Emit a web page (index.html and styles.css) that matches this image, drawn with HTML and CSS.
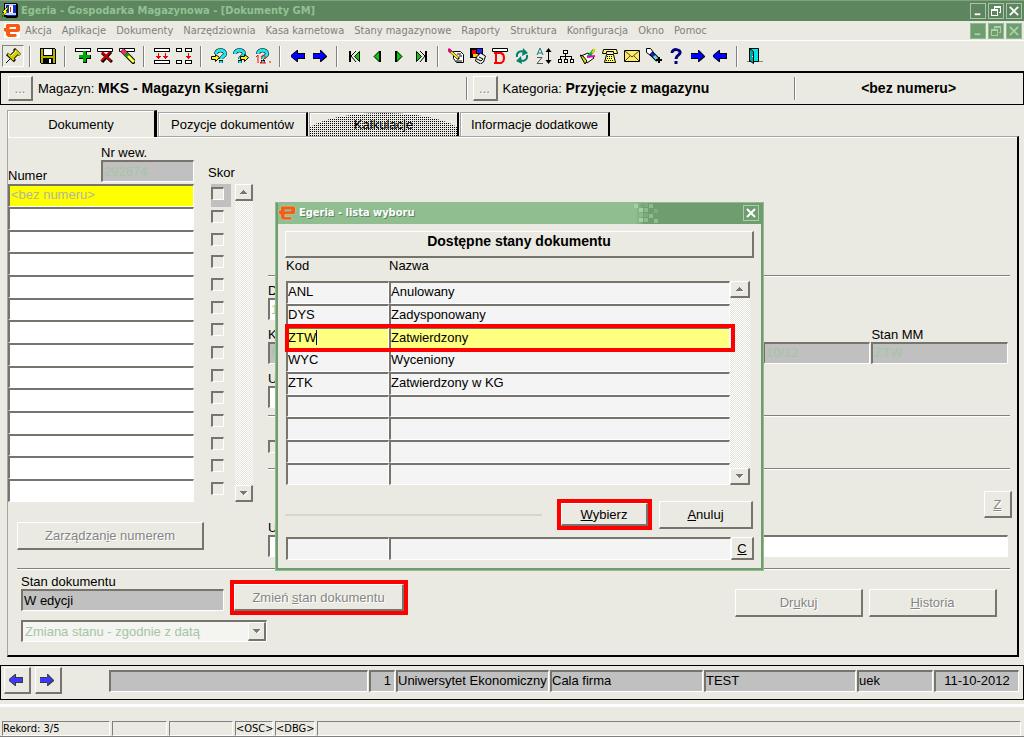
FILE: index.html
```html
<!DOCTYPE html>
<html lang="pl">
<head>
<meta charset="utf-8">
<meta name="viewport" content="width=device-width, initial-scale=1">
<title>Egeria - Gospodarka Magazynowa</title>
<link rel="stylesheet" href="styles.css">
</head>
<body>
<svg class="defs" aria-hidden="true">
  <symbol id="egeria" viewBox="0 0 16 15"><path fill="#fff" d="M0 0h16v15H0z"/><path fill="#f95b12" d="M3 1h12l1 2v5l-2 1H6v2h6l1 2-2 1H4l-2-2V9L0 8V5h2V2z"/><path fill="#fff" d="M6 4h6v2H5z"/></symbol>
  <symbol id="arrow-left" viewBox="0 0 16 16"><path fill="#000" d="M8 2v3h7v6H8v3H7L1 9V7l6-5z"/><path fill="#00f" d="M7 3v3h7v4H7v3L1 8z"/></symbol>
  <symbol id="arrow-right" viewBox="0 0 16 16"><path fill="#000" d="M8 2v3H1v6h7v3h1l6-5V8L9 2z"/><path fill="#00f" d="M8 3v3H1v4h7v3l6-5z"/></symbol>
  <symbol id="up" viewBox="0 0 8 5"><path fill="#fff" d="M1 5h7V4z"/><path fill="#777" d="M3 0h1v1h1v1h1v1h1v1H0V3h1V2h1V1h1z"/></symbol>
  <symbol id="down" viewBox="0 0 8 5"><path fill="#fff" d="M4 5l4-4v1L5 5z"/><path fill="#777" d="M0 0h7v1H6v1H5v1H4v1H3V3H2V2H1V1H0z"/></symbol>
  <symbol id="query" viewBox="0 0 16 16"><path fill="none" stroke="#000" stroke-width="4" d="M5 6c0-5 9-5 9 0 0 2-4 3-4 5M10 12v3"/><path fill="none" stroke="#20e8f0" stroke-width="3" d="M5 6c0-5 9-5 9 0 0 2-4 3-4 5M10 13v2"/></symbol>
</svg>

<header class="titlebar">
  <svg class="app-icon" viewBox="0 0 16 16" shape-rendering="crispEdges"><path fill="#000" d="M2 0h13v1h1v13h-1v1H4v-1H2z"/><path fill="#c9d4ff" d="M3 1h11v11H3z"/><path fill="#1030c0" d="M4 2h3v8H4zM11 2h3v8h-3zM5 12h9v1H5z"/><path fill="#fff" d="M7 3h4v7H7z"/><path fill="#c22" d="M8 4h1v5H8z"/><path fill="#ff0" stroke="#000" stroke-width=".5" d="M5 4L0 9h2l-2 5 6-6H4l3-4z"/></svg>
  <h1>Egeria - Gospodarka Magazynowa - [Dokumenty GM]</h1>
  <div class="win-buttons">
    <button aria-label="Minimalizuj"><svg viewBox="0 0 15 15"><path fill="#fff" d="M4 10h6v2H4z"/></svg></button>
    <button aria-label="Przywróć"><svg viewBox="0 0 14 14" shape-rendering="crispEdges"><path fill="#fff" d="M5 2h7v7h-2V8h1V4H6v1H5zM2 5h7v7H2zM3 7v4h5V7z" fill-rule="evenodd"/></svg></button>
    <button aria-label="Zamknij"><svg viewBox="0 0 15 15"><path fill="none" stroke="#fff" stroke-width="2" d="M3 3l9 9M12 3l-9 9"/></svg></button>
  </div>
</header>

<nav class="menubar">
  <svg class="menu-logo"><use href="#egeria"/></svg>
  <a href="#">Akcja</a><a href="#">Aplikacje</a><a href="#">Dokumenty</a><a href="#">Narzędziownia</a><a href="#">Kasa karnetowa</a><a href="#">Stany magazynowe</a><a href="#">Raporty</a><a href="#">Struktura</a><a href="#">Konfiguracja</a><a href="#">Okno</a><a href="#">Pomoc</a>
  <div class="win-buttons faded">
    <button aria-label="Minimalizuj dokument"><svg viewBox="0 0 15 15"><path fill="#abcfab" d="M4 10h6v2H4z"/></svg></button>
    <button aria-label="Przywróć dokument"><svg viewBox="0 0 14 14" shape-rendering="crispEdges"><path fill="#abcfab" d="M5 2h7v7h-2V8h1V4H6v1H5zM2 5h7v7H2zM3 7v4h5V7z" fill-rule="evenodd"/></svg></button>
    <button aria-label="Zamknij dokument"><svg viewBox="0 0 15 15"><path fill="none" stroke="#abcfab" stroke-width="2" d="M3 3l9 9M12 3l-9 9"/></svg></button>
  </div>
</nav>

<div class="toolbar" role="toolbar">
  <button class="pressed" aria-label="Przypnij"><svg viewBox="0 0 16 16"><path stroke="#000" stroke-width="1" d="M1 15l6-6"/><path stroke="#000" stroke-width="6" d="M7 9l5-5"/><path stroke="#000" stroke-width="3" d="M2 6l8 7M9 1l6 6"/><path stroke="#d8d000" stroke-width="4" d="M7 9l5-5"/><path stroke="#d8d000" stroke-width="2" d="M3 6l6 6M10 2l5 5"/><path stroke="#ffff90" d="M6 8l5-5"/></svg></button>
  <i></i>
  <button aria-label="Zapisz"><svg viewBox="0 0 16 16" shape-rendering="crispEdges"><path fill="#000" d="M0 0h15v1h1v15H1v-1H0z"/><path fill="#b5b500" d="M1 1h2v7h10V1h2v14h-2v-5H3v5H1z"/><path fill="#fff" d="M4 1h8v6H4zM9 11h2v4H9z"/></svg></button>
  <i></i>
  <button aria-label="Dodaj"><svg viewBox="0 0 16 16" shape-rendering="crispEdges"><path fill="#fff" stroke="#000" d="M.5.5h15v3H.5z"/><path fill="#000" d="M8 3h4v4h4v4h-4v4H8v-4H4V7h4z"/><path fill="#0a0" d="M8 3h3v4h4v3h-4v4H8v-4H4V7h4z"/></svg></button>
  <button aria-label="Usuń"><svg viewBox="0 0 16 16"><path fill="#fff" stroke="#000" d="M.5.5h15v3H.5z"/><path fill="none" stroke="#000" stroke-width="3" d="M5 5l10 9M14 4L5 14"/><path fill="none" stroke="#c00" stroke-width="2" d="M5 4l9 9M13 4L4 13"/></svg></button>
  <button aria-label="Wyczyść"><svg viewBox="0 0 16 16"><path fill="#fff" stroke="#000" d="M.5.500h15v3H.5z"/><path stroke="#000" stroke-width="5" d="M3 2l13 13"/><path stroke="#e8306a" stroke-width="4" d="M3 2l4 4"/><path stroke="#0a0" stroke-width="4" d="M7 6l2 2"/><path stroke="#ff4" stroke-width="3" d="M9 8l6 6"/></svg></button>
  <i></i>
  <button aria-label="Szablon"><svg viewBox="0 0 16 16" shape-rendering="crispEdges"><path fill="#fff" stroke="#000" d="M.5.5h15v3H.5zM.5 12.500h15v3H.5z"/><path fill="#e00" d="M4 5h1v3h2v1H6v1H5v1H4v-1H3V9H2V8h2zM11 5h1v3h2v1h-1v1h-1v1h-1v-1h-1V9H9V8h2z"/></svg></button>
  <button aria-label="Kopiuj pole"><svg viewBox="0 0 16 16" shape-rendering="crispEdges"><path fill="#fff" stroke="#000" d="M.5.5h5v3h-5zM9.500.5h6v3h-6zM.5 12.500h5v3h-5zM9.500 12.500h6v3h-6z"/><path fill="#e00" d="M12 5h1v3h2v1h-1v1h-1v1h-1v-1h-1V9h-1V8h2z"/></svg></button>
  <i></i>
  <button aria-label="Wprowadź zapytanie"><svg viewBox="0 0 16 16"><use href="#query"/><path fill="#ff0" stroke="#000" d="M.5 8.500h4v-2l4 3-4 4v-2h-4z"/></svg></button>
  <button aria-label="Wykonaj zapytanie"><svg viewBox="0 0 16 16"><use href="#query" x="-3"/><path fill="#ff0" stroke="#000" d="M7.500 8.500h4v-2l4 3-4 4v-2h-4z"/></svg></button>
  <button aria-label="Policz rekordy"><svg viewBox="0 0 16 16"><use href="#query" x="-2"/><path fill="none" stroke="#f00" d="M1 9l2-2v8M6 9c1-3 5-2 4 1l-5 5h6M14 14h2"/></svg></button>
  <i></i>
  <button aria-label="Poprzedni blok"><svg><use href="#arrow-left"/></svg></button>
  <button aria-label="Następny blok"><svg><use href="#arrow-right"/></svg></button>
  <i></i>
  <button aria-label="Pierwszy"><svg viewBox="0 0 16 16"><path stroke="#000" stroke-width="2" d="M3 3v11"/><path fill="none" stroke="#000" d="M9 3L4 8l5 6"/><path fill="#0c0" stroke="#000" d="M12.500 3.500v10L7.500 8.500z"/></svg></button>
  <button aria-label="Poprzedni"><svg viewBox="0 0 16 16"><path fill="#0c0" stroke="#000" d="M10.500 3v11L5 8.500z"/><path stroke="#000" stroke-width="2" d="M11 3v11"/></svg></button>
  <button aria-label="Następny"><svg viewBox="0 0 16 16"><path fill="#0c0" stroke="#000" d="M5.500 3v11L11 8.500z"/><path stroke="#000" stroke-width="2" d="M5 3v11"/></svg></button>
  <button aria-label="Ostatni"><svg viewBox="0 0 16 16"><path stroke="#000" stroke-width="2" d="M13 3v11"/><path fill="none" stroke="#000" d="M7 3l5 5-5 6"/><path fill="#0c0" stroke="#000" d="M3.500 3.500v10l5-5z"/></svg></button>
  <i></i>
  <button aria-label="Edytuj"><svg viewBox="0 0 16 16"><path fill="#fff" stroke="#000" d="M5.500 3.500h7l3 3v8h-7l-3-4z"/><path stroke="#000" d="M9 6h4M11 8h3M8 13h6"/><path stroke="#000" stroke-width="3" d="M1 2l10 9"/><path stroke="#ffe820" stroke-width="2" d="M3 4l7 6"/><path stroke="#e08" stroke-width="3" d="M0 1l3 3"/></svg></button>
  <button aria-label="Załączniki"><svg viewBox="0 0 16 16"><path fill="#000" d="M0 0h13v10H0z"/><path fill="#e00" d="M2 2h4v4H2z"/><path fill="#22f" d="M7 1h5v4H7z"/><path fill="#fc0" d="M3 6h5v3H3z"/><path fill="#eee" stroke="#000" d="M6.500 9l4-4 5 3-2 6-3 2-5-3z"/><path fill="none" stroke="#000" d="M9 9l4 2-2 2-4-2"/></svg></button>
  <button aria-label="Dokument"><svg viewBox="0 0 16 16"><path fill="#fff" stroke="#000" d="M.5.5h15v3H.5z"/><path fill="none" stroke="#f00" stroke-width="2" d="M4 5h5q3 1 3 5t-3 5H4zM2 5h3M2 15h3"/></svg></button>
  <button aria-label="Odśwież"><svg viewBox="0 0 16 16"><path fill="none" stroke="#078070" stroke-width="2" d="M3 9C2 4 7 2 10 4M13 7c1 5-4 7-7 5"/><path fill="#078070" d="M9 0l5 5-6 3zM7 8l-5 5 6 3z"/></svg></button>
  <button aria-label="Sortuj"><svg viewBox="0 0 16 16"><path fill="none" stroke="#167b80" d="M1 7l3-7 3 7M2 5h4"/><path fill="none" stroke="#555" d="M1 9.500h5L1 15.500h6"/><path stroke="#000" d="M12.500 1v14"/><path fill="#000" d="M12.500 0l3 4h-6zM12.500 16l3-4h-6z"/></svg></button>
  <button aria-label="Struktura"><svg viewBox="0 0 16 16" shape-rendering="crispEdges"><path fill="#fff" stroke="#000" d="M5.500 2.500h4v3h-4zM.5 11.500h3v3h-3zM6.500 11.500h3v3h-3zM12.500 11.500h3v3h-3z"/><path fill="none" stroke="#000" d="M7.500 5v6M2.500 11V8.500h11V11"/></svg></button>
  <button aria-label="Zatwierdź"><svg viewBox="0 0 16 16"><path fill="#fff" stroke="#000" d="M1 8l7-3 6 5-7 5z"/><path fill="#dd0" stroke="#000" d="M0 7l3 1 4 5-2 3z"/><path stroke="#0a4" stroke-width="3" d="M14 2L8 9"/><path stroke="#e0b" stroke-width="2" d="M7 9l8-1"/><path stroke="#fc0" stroke-width="2" d="M15 1l-3 4"/></svg></button>
  <button aria-label="Telefon"><svg viewBox="0 0 16 16"><path fill="#ff6" stroke="#000" d="M1.500 1.500h13l1 4h-4v-2h-7v2h-4zM4.500 6.500h7l2 8h-11z"/><path stroke="#000" stroke-dasharray="1 1" d="M5 8.500h6M5 10.500h6M4 12.500h8"/></svg></button>
  <button aria-label="Poczta"><svg viewBox="0 0 16 16"><path fill="#ffe96a" stroke="#000" d="M.5 2.500h15v11H.5z"/><path fill="none" stroke="#000" stroke-width=".7" d="M1 3l7 6 7-6M1 13l5-5M15 13l-5-5"/></svg></button>
  <button aria-label="Latarka"><svg viewBox="0 0 16 16"><path fill="#fff" stroke="#000" d="M.5.500h4l3 4-3 3-4-3z"/><path stroke="#000" stroke-width="5" d="M5 5l7 7"/><path stroke="#22c" stroke-width="3" d="M5 5l3 3"/><path stroke="#5de8f0" stroke-width="3" d="M8 8l3 3"/><path fill="#000" d="M12 9h2v2h2v2h-2v2h-2v-2h-2v-2h2z"/></svg></button>
  <button aria-label="Pomoc"><svg viewBox="0 0 16 16"><path fill="none" stroke="#000080" stroke-width="3" d="M4 5c0-5 9-4 8 0 0 2-4 2-4 6M8 13v3"/></svg></button>
  <button aria-label="Dalej"><svg><use href="#arrow-right"/></svg></button>
  <button aria-label="Wstecz"><svg><use href="#arrow-left"/></svg></button>
  <i></i>
  <button aria-label="Wyjście"><svg viewBox="0 0 16 16"><path stroke="#888" d="M0 13.500h16"/><path fill="#00e5e5" stroke="#000" d="M2.500.5h9v13h-9z"/><path fill="#0aa" stroke="#000" d="M2.500.5l4 3v12l-4-3z"/><path fill="#fff" d="M5 8h1v1H5z"/></svg></button>
</div>

<section class="infobar">
  <div><button class="btn dots" disabled>...</button><span>Magazyn: <b>MKS - Magazyn Księgarni</b></span></div>
  <div><button class="btn dots" disabled>...</button><span>Kategoria: <b>Przyjęcie z magazynu</b></span></div>
  <div class="center"><b>&lt;bez numeru&gt;</b></div>
</section>

<main class="workspace">
  <div class="tabs" role="tablist">
    <button role="tab" aria-selected="true" class="active">Dokumenty</button>
    <button role="tab">Pozycje dokumentów</button>
    <button role="tab" class="hatched">Kalkulacje</button>
    <button role="tab">Informacje dodatkowe</button>
  </div>
  <div class="panel">
    <div class="upper">
      <div class="left">
        <div class="list-head">
          <span class="numer">Numer</span>
          <label class="wew">Nr wew.<input class="field gray faint" value="292674" readonly></label>
          <span class="skor">Skor</span>
        </div>
        <div class="list">
          <ul class="records">
            <li><input class="field current" aria-label="Numer 1" value="&lt;bez numeru&gt;"><span><input type="checkbox" aria-label="Skor 1"></span></li>
            <li><input class="field" aria-label="Numer 2"><span><input type="checkbox" aria-label="Skor 2"></span></li>
            <li><input class="field" aria-label="Numer 3"><span><input type="checkbox" aria-label="Skor 3"></span></li>
            <li><input class="field" aria-label="Numer 4"><span><input type="checkbox" aria-label="Skor 4"></span></li>
            <li><input class="field" aria-label="Numer 5"><span><input type="checkbox" aria-label="Skor 5"></span></li>
            <li><input class="field" aria-label="Numer 6"><span><input type="checkbox" aria-label="Skor 6"></span></li>
            <li><input class="field" aria-label="Numer 7"><span><input type="checkbox" aria-label="Skor 7"></span></li>
            <li><input class="field" aria-label="Numer 8"><span><input type="checkbox" aria-label="Skor 8"></span></li>
            <li><input class="field" aria-label="Numer 9"><span><input type="checkbox" aria-label="Skor 9"></span></li>
            <li><input class="field" aria-label="Numer 10"><span><input type="checkbox" aria-label="Skor 10"></span></li>
            <li><input class="field" aria-label="Numer 11"><span><input type="checkbox" aria-label="Skor 11"></span></li>
            <li><input class="field" aria-label="Numer 12"><span><input type="checkbox" aria-label="Skor 12"></span></li>
            <li><input class="field" aria-label="Numer 13"><span><input type="checkbox" aria-label="Skor 13"></span></li>
            <li><input class="field" aria-label="Numer 14"><span><input type="checkbox" aria-label="Skor 14"></span></li>
          </ul>
          <div class="scroll"><button class="btn" aria-label="W górę"><svg><use href="#up"/></svg></button><button class="btn" aria-label="W dół"><svg><use href="#down"/></svg></button></div>
        </div>
        <button class="btn manage" disabled>Zarządzan<u>i</u>e numerem</button>
      </div>
      <div class="right">
        <hr>
        <label class="stack first half">D<input class="field faint" value="1"></label>
        <div class="mm">
          <label class="stack">K<input class="field gray faint" value="M" readonly></label>
          <label class="stack"><span>&nbsp;</span><input class="field gray faint" value="10/12" readonly></label>
          <label class="stack">Stan MM<input class="field gray faint" value="ZTW" readonly></label>
        </div>
        <label class="stack half">U<input class="field"></label>
        <hr class="mid">
        <input type="checkbox" aria-label="Znacznik">
        <hr>
        <button class="btn z" disabled><u>Z</u></button>
        <label class="stack">U<input class="field"></label>
      </div>
    </div>
    <hr class="divider">
    <div class="lower">
      <div class="state">
        <label class="stack">Stan dokumentu<input class="field gray" value="W edycji" readonly></label>
        <div class="combo"><select aria-label="Tryb zmiany stanu" disabled><option>Zmiana stanu - zgodnie z datą</option></select><span class="btn"><svg><use href="#down"/></svg></span></div>
      </div>
      <div class="mark change"><button class="btn" disabled>Zmień <u>s</u>tan dokumentu</button></div>
      <div class="actions"><button class="btn" disabled>Dr<u>u</u>kuj</button><button class="btn" disabled><u>H</u>istoria</button></div>
    </div>
  </div>
</main>

<section class="recordbar">
  <button class="btn" aria-label="Poprzedni rekord"><svg><use href="#arrow-left"/></svg></button>
  <button class="btn" aria-label="Następny rekord"><svg><use href="#arrow-right"/></svg></button>
  <div class="cells">
    <span class="field gray"></span><span class="field gray num">1</span><span class="field gray">Uniwersytet Ekonomiczny</span><span class="field gray">Cala firma</span><span class="field gray">TEST</span><span class="field gray">uek</span><span class="field gray date">11-10-2012</span>
  </div>
</section>

<footer class="statusbar">
  <span>Rekord: 3/5</span><span></span><span></span><span>&lt;OSC&gt;</span><span>&lt;DBG&gt;</span><span></span>
</footer>

<section class="dialog" role="dialog" aria-labelledby="dlg-title">
  <header>
    <svg class="dlg-logo" viewBox="0 0 16 15"><path fill="#f95b12" stroke="#b9d8b9" stroke-width=".6" d="M3 1h12l1 2v5l-2 1H6v2h6l1 2-2 1H4l-2-2V9L0 8V5h2V2z"/><path fill="#90be90" d="M6 4h6v2H5z"/></svg>
    <h2 id="dlg-title">Egeria - lista wyboru</h2>
    <svg class="pixels" viewBox="0 0 28 20" shape-rendering="crispEdges"><path fill="#a7cfa7" d="M0 1h4v4H0zM5 5h4v4H5zM5 15h4v4H5z"/><path fill="#8fba8f" d="M5 10h4v4H5zM15 1h4v4h-4zM10 5h4v4h-4zM15 11h4v4h-4zM20 16h4v4h-4zM10 15h4v4h-4z"/><path fill="#7cab7c" d="M10 0h4v4h-4zM20 6h4v4h-4zM10 10h4v4h-4z"/></svg>
    <button aria-label="Zamknij listę"><svg viewBox="0 0 14 14"><path fill="none" stroke="#fff" stroke-width="2" d="M3 3l8 8M11 3l-8 8"/></svg></button>
  </header>
  <div class="dlg-body">
    <h3 class="btn">Dostępne stany dokumentu</h3>
    <div class="lov">
      <table>
        <thead><tr><th class="code">Kod</th><th>Nazwa</th></tr></thead>
        <tbody>
          <tr><td>ANL</td><td>Anulowany</td></tr>
          <tr><td>DYS</td><td>Zadysponowany</td></tr>
          <tr class="chosen"><td><span class="caret">ZTW</span></td><td>Zatwierdzony</td></tr>
          <tr><td>WYC</td><td>Wyceniony</td></tr>
          <tr><td>ZTK</td><td>Zatwierdzony w KG</td></tr>
          <tr><td></td><td></td></tr>
          <tr><td></td><td></td></tr>
          <tr><td></td><td></td></tr>
          <tr><td></td><td></td></tr>
        </tbody>
      </table>
      <div class="scroll"><button class="btn" aria-label="Lista w górę"><svg><use href="#up"/></svg></button><button class="btn" aria-label="Lista w dół"><svg><use href="#down"/></svg></button></div>
    </div>
    <div class="dlg-actions">
      <hr>
      <div class="mark"><button class="btn"><u>W</u>ybierz</button></div>
      <button class="btn cancel"><u>A</u>nuluj</button>
    </div>
    <div class="dlg-filter"><input class="field code" aria-label="Filtr kodu"><input class="field" aria-label="Filtr nazwy"><button class="btn"><u>C</u></button></div>
  </div>
</section>
</body>
</html>
```

FILE: styles.css
```css
:root {
  --face: #ebeae2;
  --shade: #76746c;
  --gray: #c0c0c0;
  --red: #f00;
}
* { box-sizing: border-box; }
body {
  margin: 0;
  min-height: 100vh;
  display: flex;
  flex-direction: column;
  background: var(--face);
  color: #000;
  font: 13px/15px "Liberation Sans", Arial, sans-serif;
}
.defs { display: none; }
h1, h2, h3, ul { margin: 0; padding: 0; }
button, input, select { font: inherit; color: inherit; margin: 0; padding: 0; border-radius: 0; }
b { font-size: 14px; }
hr { margin: 0; border: 0; height: 2px; border-top: 1px solid #808080; border-bottom: 1px solid #fff; }

.titlebar, .menubar {
  display: flex;
  align-items: center;
  font: 11px/14px "DejaVu Sans Condensed", "DejaVu Sans", sans-serif;
}
.titlebar { height: 21px; padding: 0 2px; gap: 3px; background: #5d865f; border-top: 1px solid #7fa37f; }
.titlebar h1 { font-size: 11px; color: #93c193; white-space: nowrap; }
.app-icon { width: 16px; height: 16px; }
.win-buttons { display: flex; gap: 2px; margin-left: auto; }
.win-buttons button { width: 16px; height: 16px; background: none; border: 1px solid #a9c4a9; }
.win-buttons svg, .dialog header button svg { display: block; width: 14px; height: 14px; }
.win-buttons.faded button { background: #6f9d6f; border-color: #8fba8f; }
.menubar { height: 20px; padding: 0 2px 0 4px; border-bottom: 1px solid #fff; color: #808080; }
.menubar a { color: inherit; text-decoration: none; margin-right: 10px; white-space: nowrap; }
.menu-logo { width: 16px; height: 15px; margin-right: 5px; }

.toolbar { display: flex; align-items: center; height: 30px; padding: 0 2px; }
.toolbar button { width: 22px; height: 22px; padding: 2px; border: 1px solid transparent; background: none; }
.toolbar .pressed { border-color: #808080 #fff #fff #808080; }
.toolbar svg { display: block; width: 16px; height: 16px; }
.toolbar i { width: 2px; height: 21px; margin: 0 6px 0 5px; border-left: 1px solid #808080; border-right: 1px solid #fff; }

.infobar {
  display: grid;
  grid-template-columns: 465fr 329fr 229fr;
  height: 34px;
  border: 1px solid #000;
  border-top-width: 2px;
}
.infobar div { display: flex; align-items: center; gap: 5px; padding-left: 7px; }
.infobar div + div { background: linear-gradient(90deg, #808080 1px, #fff 1px) 0 4px / 2px 23px no-repeat; }
.infobar .center { justify-content: center; padding: 0; }

.btn {
  background: var(--face);
  border: 1px solid;
  border-width: 1px 2px 2px 1px;
  border-color: #fff var(--shade) var(--shade) #fff;
}
.btn:disabled { color: #858585; text-shadow: 1px 1px #fff; }
.dots { width: 25px; height: 25px; }

.field {
  display: block;
  height: 22px;
  padding: 0 1px;
  background: #fff;
  border: 2px solid;
  border-width: 2px 1px 1px 2px;
  border-color: var(--shade) #fff #fff var(--shade);
  outline: 0;
}
.field.gray { background: var(--gray); }
.field.faint { color: #a5c5a5; }
input[type="checkbox"] {
  appearance: none;
  display: block;
  width: 13px;
  height: 13px;
  border: 2px solid;
  border-width: 2px 1px 1px 2px;
  border-color: var(--shade) #fff #fff var(--shade);
}

.workspace { padding: 5px 5px 8px 7px; }
.tabs { display: flex; align-items: flex-end; gap: 1px; }
.tabs button {
  position: relative;
  width: 150px;
  height: 24px;
  background: var(--face);
  border: 1px solid #a5a5a5;
  border-right: 2px solid #000;
  border-bottom: 0;
  box-shadow: inset 1px 1px #fff;
}
.tabs .active { height: 27px; margin-bottom: -1px; border-right-width: 3px; }
.hatched::after {
  content: "";
  position: absolute;
  inset: 0;
  clip-path: ellipse(54% 100% at 50% 100%);
  background: conic-gradient(#0000 75%, #000 75%) 0 0 / 2px 2px;
}
.panel {
  border: 1px solid #a5a5a5;
  border-width: 1px 2px 2px 1px;
  border-right-color: #000;
  border-bottom-color: #000;
  box-shadow: inset 0 1px #fff;
  padding: 8px 0 13px;
}
.upper { display: flex; gap: 15px; padding-right: 9px; }
.left { width: 245px; flex: none; }
.list-head { display: flex; align-items: flex-end; height: 39px; padding-bottom: 1px; }
.numer { width: 93px; }
.wew { width: 93px; align-self: flex-start; }
.wew .field { width: 100%; }
.skor { margin-left: 14px; padding-bottom: 3px; }
.list { display: flex; justify-content: space-between; }
.records { list-style: none; }
.records li { display: flex; gap: 17px; height: 23px; }
.records li:nth-child(3n) { height: 22px; }
.records .field { width: 186px; height: 100%; }
.records .current { padding-bottom: 3px; background: #ff0; color: #b5b5a0; }
.records span { width: 20px; padding-top: 3px; }
.records li:first-child span { background: var(--gray); }
.records li:first-child [type="checkbox"] { background: var(--face); }
.scroll {
  width: 18px;
  display: flex;
  flex-direction: column;
  justify-content: space-between;
  background: conic-gradient(#fff 25%, #e4e3db 0 50%, #fff 0 75%, #e4e3db 0) 0 0 / 2px 2px;
}
.scroll .btn { height: 17px; display: grid; place-items: center; }
.scroll svg, .combo svg { display: block; width: 8px; height: 5px; }
.manage { width: 187px; height: 28px; margin: 20px 0 0 9px; }

.right { flex: 1; padding-top: 130px; }
.right hr { margin-right: -2px; }
.stack { display: block; }
.stack .field { width: 100%; }
.right .stack { margin-top: 7px; }
.right .first { margin-top: 6px; }
.right .half { width: 50%; }
.mm { display: grid; grid-template-columns: 492fr 107fr 136fr; gap: 1px; }
.mm .field { padding: 0 1px 2px; }
.right .mid { margin: 7px -2px 23px 0; }
.right input[type="checkbox"] { margin-bottom: 15px; }
.right .z { display: block; width: 28px; height: 27px; margin: 21px -4px 0 auto; }
.right .z + .stack { margin-top: 2px; }
.divider { margin: 11px 7px 0 9px; }

.lower { display: flex; align-items: flex-start; padding: 4px 20px 0 13px; }
.state { width: 203px; }
.combo {
  position: relative;
  width: 246px;
  height: 22px;
  margin-top: 9px;
  background: #f4f4f0;
  border: 2px solid;
  border-width: 2px 1px 1px 2px;
  border-color: var(--shade) #fff #fff var(--shade);
}
.combo select { appearance: none; display: block; width: 100%; height: 100%; padding: 0 2px; border: 0; background: none; color: #a5c5a5; opacity: 1; }
.combo .btn { position: absolute; top: 0; right: 0; bottom: 0; width: 18px; display: grid; place-items: center; }
.mark { border: 4px solid var(--red); }
.mark .btn { display: block; width: 100%; height: 100%; }
.change { width: 178px; height: 35px; margin: 6px 0 0 6px; }
.actions { display: flex; gap: 6px; margin: 15px 0 0 auto; }
.actions .btn { width: 128px; height: 28px; }

.recordbar { display: flex; align-items: center; height: 35px; padding: 0 4px 4px 3px; border: 1px solid #000; }
.recordbar > .btn { flex: none; width: 27px; height: 27px; margin-right: 4px; padding: 3px; }
.recordbar > .btn svg { display: block; width: 16px; height: 16px; opacity: .75; }
.cells {
  flex: 1;
  display: grid;
  grid-template-columns: 259fr 26fr 153fr 153fr 152fr 76fr 85fr;
  gap: 1px;
  margin-left: 43px;
}
.cells .field { min-width: 0; overflow: hidden; white-space: nowrap; line-height: 18px; padding: 0; }
.cells .num { text-align: right; padding-right: 3px; }
.cells .date { text-align: center; }

.statusbar {
  display: grid;
  grid-template-columns: 108px 55px 64px 38px 40px 1fr;
  gap: 2px;
  margin-top: 4px;
  padding: 14px 3px 0 2px;
  border-top: 3px solid #fff;
  border-bottom: 1px solid #808080;
  font: 11px/13px "DejaVu Sans Condensed", "DejaVu Sans", sans-serif;
}
.statusbar span { height: 15px; border: 1px solid; border-color: #808080 #fff #fff #808080; white-space: nowrap; }

.dialog {
  position: absolute;
  left: 275px;
  top: 202px;
  width: 489px;
  background: var(--face);
  border: 3px solid #6f9d6f;
  border-top: 0;
  outline: 1px solid #90be90;
  outline-offset: -1px;
}
.dialog header {
  display: flex;
  align-items: center;
  height: 22px;
  padding-right: 2px;
  background: linear-gradient(90deg, #90be90 74%, #6f9d6f 76%);
}
.dlg-logo { width: 18px; height: 16px; }
.dialog h2 { flex: 1; margin-left: 3px; font: bold 11px/14px "DejaVu Sans Condensed", "DejaVu Sans", sans-serif; color: #fff; text-shadow: 1px 1px #5d865f; }
.pixels { width: 28px; height: 20px; margin-right: 81px; }
.dialog header button { width: 16px; height: 16px; background: none; border: 1px solid #a9cfa9; }
.dlg-body { padding: 7px 7px 8px; }
.dlg-body h3 { height: 27px; text-align: center; font-size: 14px; line-height: 19px; }
.lov { display: flex; align-items: flex-end; padding: 0 4px 0 1px; }
.lov table { flex: 1; border-spacing: 0; table-layout: fixed; }
.lov th { height: 23px; padding: 0; text-align: left; font-weight: normal; vertical-align: top; }
.lov .code { width: 103px; }
.lov td {
  height: 23px;
  padding: 0 0 3px;
  background: #f4f4f4;
  border: 2px solid;
  border-width: 2px 1px 1px 2px;
  border-color: var(--shade) #fff #fff var(--shade);
}
.lov tr:nth-child(3n) td { height: 22px; }
.lov .chosen { position: relative; }
.lov .chosen td { padding-bottom: 2px; background: #ffff80; }
.lov .chosen::after { content: ""; position: absolute; inset: -3px -5px -3px -1px; border: 4px solid var(--red); }
.caret { border-right: 1px solid #000080; }
.lov .scroll { width: 20px; height: 204px; }
.dlg-actions { display: flex; align-items: center; margin-top: 14px; }
.dlg-actions hr { flex: 1; border-color: #d6d5ce; }
.dlg-actions .mark { width: 95px; height: 31px; margin-left: 15px; }
.cancel { width: 94px; height: 28px; margin: 0 1px 0 7px; }
.dlg-filter { display: flex; margin: 7px 0 0 1px; }
.dlg-filter .field { flex: 1; min-width: 0; height: 23px; background: #f4f4f4; }
.dlg-filter .code { flex: none; width: 103px; }
.dlg-filter .btn { width: 23px; }
```
